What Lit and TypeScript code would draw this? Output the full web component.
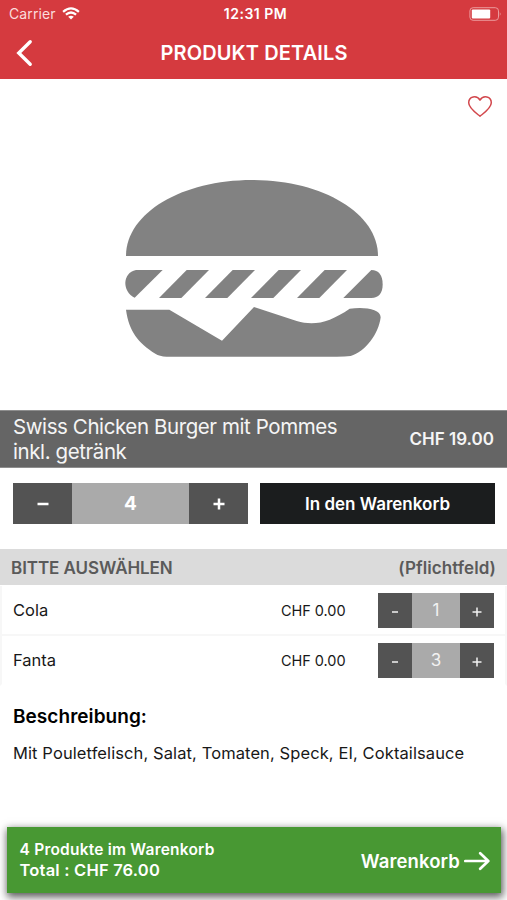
import { LitElement, html, css } from "lit";
import { customElement, property, state } from "lit/decorators.js";

@customElement("quantity-stepper")
class QuantityStepper extends LitElement {
  @property({ type: Number }) value = 0;
  @property({ type: Boolean, reflect: true }) large = false;

  static styles = css`
    :host {
      display: grid;
      grid-template-columns: 34px 48px 34px;
      height: 34px;
      color: #f2f2f2;
      font: 400 17px/35px Inter, "Liberation Sans", sans-serif;
      text-align: center;
    }
    :host([large]) {
      grid-template-columns: 59px 117px 59px;
      height: 41px;
      color: #fff;
      font-weight: 700;
      font-size: 19px;
      line-height: 41px;
    }
    .step {
      background: #535353;
      display: flex;
      align-items: center;
      justify-content: center;
    }
    .value {
      background: #aaa;
    }
    svg {
      width: 12px;
      height: 12px;
      fill: none;
      stroke: #f2f2f2;
      stroke-width: 1.5;
      margin-top: 2px;
    }
    :host([large]) svg {
      stroke: #fff;
      stroke-width: 2.5;
      margin-top: 0;
    }
  `;

  render() {
    const minus = this.large ? "M.5 6H11.5" : "M3 6H9";
    const plus = this.large ? "M.5 6H11.5M6 .5V11.5" : "M1.5 6H10.5M6 1.5V10.5";
    return html`
      <div class="step"><svg viewBox="0 0 12 12"><path d=${minus} /></svg></div>
      <div class="value">${this.value}</div>
      <div class="step"><svg viewBox="0 0 12 12"><path d=${plus} /></svg></div>
    `;
  }
}

@customElement("app-root")
class AppRoot extends LitElement {
  @state() private options = [
    { name: "Cola", price: "CHF 0.00", count: 1 },
    { name: "Fanta", price: "CHF 0.00", count: 3 },
  ];

  static styles = css`
    :host {
      display: flex;
      flex-direction: column;
      width: 507px;
      height: 900px;
      overflow: hidden;
      background: #fff;
      color: #181818;
      font-family: Inter, "Liberation Sans", sans-serif;
      white-space: nowrap;
    }
    * {
      box-sizing: border-box;
    }
    svg {
      display: block;
    }
    header {
      height: 79px;
      flex: none;
      background: #d53a3f;
      color: #fff;
    }
    .status {
      height: 27px;
      display: grid;
      grid-template-columns: 1fr auto 1fr;
      align-items: center;
      padding: 0 5px 0 9px;
      font-size: 14px;
    }
    .carrier {
      display: flex;
      align-items: center;
      gap: 6px;
      color: #fbdcdc;
    }
    .carrier span {
      letter-spacing: 0.1px;
    }
    .clock {
      font-weight: 600;
      letter-spacing: 0.5px;
    }
    .battery {
      justify-self: end;
    }
    .nav {
      height: 51px;
      display: grid;
      grid-template-columns: 48px 1fr 48px;
      align-items: center;
      padding-left: 1px;
    }
    .nav svg {
      margin-left: 12px;
    }
    .nav h1 {
      margin: 0;
      text-align: center;
      font-weight: 600;
      font-size: 20px;
      letter-spacing: 0.13px;
    }
    .hero {
      height: 331px;
      flex: none;
      display: flex;
      flex-direction: column;
      padding: 16px 14px 0 0;
    }
    .heart {
      align-self: flex-end;
    }
    .burger {
      margin: 51px 0 0 110px;
    }
    .title {
      height: 58px;
      flex: none;
      display: flex;
      align-items: center;
      justify-content: space-between;
      padding: 0 13px;
      background: #656565;
      border-top: 1px solid #8e8e8e;
      border-bottom: 1px solid #8e8e8e;
      color: #f5f5f5;
    }
    .name {
      padding-top: 1px;
      font-size: 20.5px;
      line-height: 24.5px;
      letter-spacing: -0.41px;
    }
    .price {
      font-size: 17px;
      font-weight: 600;
    }
    .buy {
      display: grid;
      grid-template-columns: 235px 235px;
      gap: 12px;
      padding: 15px 12px 0 13px;
      height: 81px;
      flex: none;
    }
    .add {
      height: 41px;
      background: #1b1d1e;
      color: #fff;
      font-size: 17px;
      font-weight: 600;
      line-height: 42px;
      text-align: center;
    }
    .section {
      height: 36px;
      flex: none;
      display: flex;
      align-items: center;
      justify-content: space-between;
      padding: 1px 11px 0;
      background: #dbdbdb;
      color: #5a5a5a;
      font-size: 17px;
      font-weight: 600;
    }
    .pick {
      letter-spacing: -0.06px;
    }
    .req {
      letter-spacing: 0.08px;
    }
    .options {
      padding-top: 1px;
    }
    .option {
      height: 50px;
      display: grid;
      grid-template-columns: 268px 97px 116px;
      align-items: center;
      padding-left: 11px;
      border: solid #f7f7f7;
      border-width: 0 2px 2px;
    }
    .option:last-child {
      border-bottom-color: transparent;
    }
    .option-name {
      font-size: 16.5px;
    }
    .option-price {
      font-size: 14.5px;
      letter-spacing: -0.05px;
    }
    .about {
      padding: 19px 13px 0;
      flex: 1;
    }
    h2 {
      margin: 0;
      color: #000;
      font-size: 19px;
      font-weight: 600;
      line-height: 24px;
      letter-spacing: 0.05px;
    }
    .about p {
      margin: 13px 0 0;
      font-size: 16.5px;
      line-height: 22px;
      letter-spacing: 0.1px;
    }
    .cart {
      margin: 0 6px 7px 7px;
      height: 66px;
      flex: none;
      display: flex;
      align-items: center;
      justify-content: space-between;
      padding: 0 11px 0 12.5px;
      background: #489833;
      color: #fff;
      font-weight: 600;
      box-shadow: 1px 3px 8px 1px rgba(0, 0, 0, 0.65);
    }
    .summary {
      line-height: 21px;
    }
    .count {
      font-size: 15.5px;
      letter-spacing: 0.22px;
    }
    .total {
      font-size: 16.5px;
      letter-spacing: 0.2px;
    }
    .go {
      display: flex;
      align-items: center;
      gap: 4px;
      font-size: 18.5px;
      letter-spacing: 0.12px;
      padding-top: 2px;
    }
  `;

  render() {
    return html`
      <header>
        <div class="status">
          <div class="carrier">
            <span>Carrier</span>
            <svg width="18" height="13" viewBox="0 0 18 13" fill="none" stroke="#fff" stroke-width="2.2">
              <path d="M1.1 4.8Q9-2.1 16.9 4.8M3.9 7.7Q9 3.3 14.1 7.7" />
              <path d="M9 12.6L6.2 9.8Q9 7.6 11.8 9.8Z" fill="#fff" stroke="none" />
            </svg>
          </div>
          <div class="clock">12:31 PM</div>
          <svg class="battery" width="33" height="14" viewBox="0 0 33 14">
            <rect x=".9" y=".7" width="28.6" height="12.6" rx="3.2" fill="none" stroke="#eb9a9c" />
            <rect x="2.8" y="2.6" width="18.4" height="8.8" rx="1" fill="#fff" />
            <path d="M30.8 5Q32.6 7 30.8 9Z" fill="#eb9a9c" />
          </svg>
        </div>
        <div class="nav">
          <svg width="24" height="30" viewBox="0 0 24 30" fill="none" stroke="#fff" stroke-width="3.4" stroke-linecap="round">
            <path d="M17.2 3.8L5.8 15L17.2 26.2" />
          </svg>
          <h1>PRODUKT DETAILS</h1>
        </div>
      </header>

      <div class="hero">
        <svg class="heart" width="26" height="24" viewBox="0 0 26 24" fill="none" stroke="#d2474c" stroke-width="1.5" stroke-linejoin="round">
          <path d="M13 21.2C8 17.2 1.7 13 1.7 7.8C1.7 1.2 9.8-.2 13 5.2C16.200-.2 24.300 1.2 24.300 7.8C24.300 13 18 17.2 13 21.2Z" />
        </svg>
        <svg class="burger" width="290" height="200" viewBox="0 0 870 600" fill="#828282">
          <path d="M48 258C48 128 217 30 426 30C635 30 804 128 804 258Z" />
          <path d="M78 300H158L74 383C36 366 36 308 78 300Z" />
          <path d="M230 300H297L214 384H147Z" />
          <path d="M368 300H435L352 384H285Z" />
          <path d="M506 300H573L490 384H423Z" />
          <path d="M644 300H711L628 384H561Z" />
          <path d="M784 300C806 300 818 315 818 343C818 370 806 384 784 384H700Z" />
          <path d="M48 419H178L336 512L432 411L560 453C615 469 660 456 719 416C762 410 812 416 812 442C806 492 766 545 722 558Q706 560 680 560H170Q148 559 136 551C84 518 57 484 48 419Z" />
        </svg>
      </div>

      <div class="title">
        <div class="name">Swiss Chicken Burger mit Pommes<br />inkl. getränk</div>
        <div class="price">CHF 19.00</div>
      </div>

      <div class="buy">
        <quantity-stepper large .value=${4}></quantity-stepper>
        <div class="add">In den Warenkorb</div>
      </div>

      <div class="section"><span class="pick">BITTE AUSWÄHLEN</span><span class="req">(Pflichtfeld)</span></div>
      <div class="options">
        ${this.options.map(
          (o) => html`
            <div class="option">
              <span class="option-name">${o.name}</span>
              <span class="option-price">${o.price}</span>
              <quantity-stepper .value=${o.count}></quantity-stepper>
            </div>
          `
        )}
      </div>

      <div class="about">
        <h2>Beschreibung:</h2>
        <p>Mit Pouletfelisch, Salat, Tomaten, Speck, EI, Coktailsauce</p>
      </div>

      <div class="cart">
        <div class="summary">
          <div class="count">4 Produkte im Warenkorb</div>
          <div class="total">Total : CHF 76.00</div>
        </div>
        <div class="go">
          <span>Warenkorb</span>
          <svg width="26" height="20" viewBox="0 0 26 20" fill="none" stroke="#fff" stroke-width="2.7" stroke-linecap="round" stroke-linejoin="round">
            <path d="M1.300 10H24M16.200 2.300L24.300 10L16.200 17.700" />
          </svg>
        </div>
      </div>
    `;
  }
}
